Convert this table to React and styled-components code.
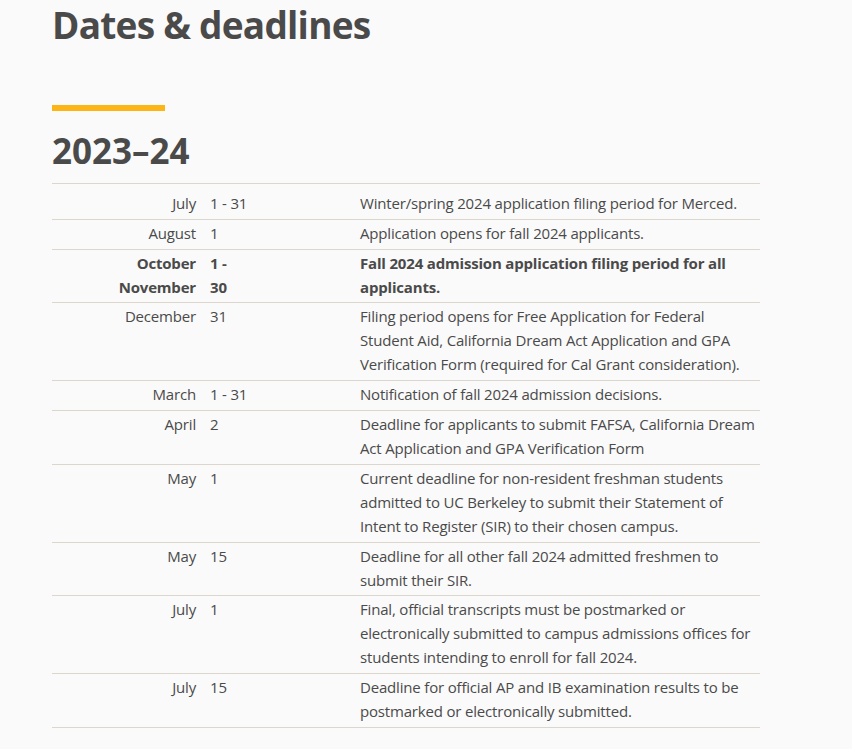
import styled, { createGlobalStyle } from 'styled-components'

const GlobalStyle = createGlobalStyle`
    body {
        margin: 0;
        background: #fafafa;
        font-family: "Open Sans", "Noto Sans", sans-serif;
        color: #4a4a4a;
    }
`;

const rows = [
    { month: ['July'], day: ['1 - 31'], text: 'Winter/spring 2024 application filing period for Merced.' },
    { month: ['August'], day: ['1'], text: 'Application opens for fall 2024 applicants.' },
    { month: ['October', 'November'], day: ['1 -', '30'], text: 'Fall 2024 admission application filing period for all applicants.', bold: true },
    { month: ['December'], day: ['31'], text: 'Filing period opens for Free Application for Federal Student Aid, California Dream Act Application and GPA Verification Form (required for Cal Grant consideration).' },
    { month: ['March'], day: ['1 - 31'], text: 'Notification of fall 2024 admission decisions.' },
    { month: ['April'], day: ['2'], text: 'Deadline for applicants to submit FAFSA, California Dream Act Application and GPA Verification Form' },
    { month: ['May'], day: ['1'], text: 'Current deadline for non-resident freshman students admitted to UC Berkeley to submit their Statement of Intent to Register (SIR) to their chosen campus.' },
    { month: ['May'], day: ['15'], text: 'Deadline for all other fall 2024 admitted freshmen to submit their SIR.' },
    { month: ['July'], day: ['1'], text: 'Final, official transcripts must be postmarked or electronically submitted to campus admissions offices for students intending to enroll for fall 2024.' },
    { month: ['July'], day: ['15'], text: 'Deadline for official AP and IB examination results to be postmarked or electronically submitted.' },
];

const Page = styled.main`
    padding: 0 52px;
    width: 708px;
`;

const Title = styled.h1`
    margin: 0;
    padding-top: 1px;
    font-size: 37px;
    line-height: 48px;
    font-weight: 700;
    letter-spacing: -0.75px;
`;

const GoldBar = styled.div`
    margin-top: 56px;
    width: 113px;
    height: 6px;
    background: #fdb515;
`;

const Year = styled.h2`
    margin: 18px 0 0;
    font-size: 35px;
    line-height: 44px;
    font-weight: 700;
`;

const Table = styled.table`
    margin-top: 10px;
    width: 708px;
    table-layout: fixed;
    border-collapse: collapse;
    font-size: 15px;
    line-height: 24px;
    letter-spacing: -0.18px;
`;

const Row = styled.tr`
    border-top: 1px solid #ddd6cc;
    border-bottom: 1px solid #ddd6cc;
    font-weight: ${(props) => (props.bold ? 700 : 400)};
    vertical-align: top;
`;

const Cell = styled.td`
    padding: ${(props) => (props.first ? '7px' : '1px')} 0 3.8px 0;
`;

const Month = styled(Cell)`
    width: 144px;
    padding-right: 4px;
    text-align: right;
`;

const Day = styled(Cell)`
    width: 145px;
    padding-left: 10px;
`;

const Desc = styled(Cell)`
    padding-left: 5px;
`;

const Lines = ({ items }) => items.map((t, i) => (
    <span key={i}>{i > 0 && <br />}{t}</span>
));

export default function App() {
    return (
        <Page>
            <GlobalStyle />
            <Title>Dates &amp; deadlines</Title>
            <GoldBar />
            <Year>2023–24</Year>
            <Table>
                <tbody>
                    {rows.map((r, i) => (
                        <Row key={i} bold={r.bold}>
                            <Month first={i === 0}><Lines items={r.month} /></Month>
                            <Day first={i === 0}><Lines items={r.day} /></Day>
                            <Desc first={i === 0}>{r.text}</Desc>
                        </Row>
                    ))}
                </tbody>
            </Table>
        </Page>
    )
}
